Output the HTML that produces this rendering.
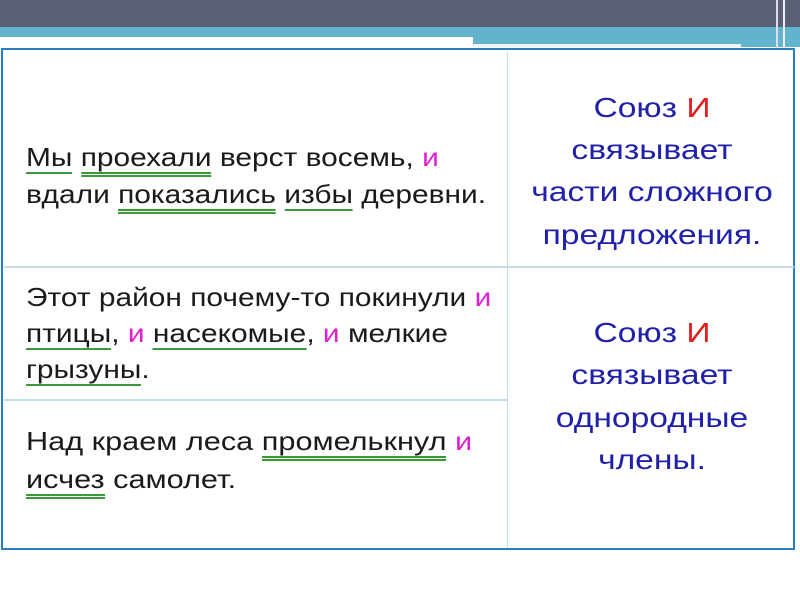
<!DOCTYPE html>
<html><head><meta charset="utf-8"><style>
body{margin:0;width:800px;height:600px;position:relative;background:#fff;overflow:hidden;font-family:"Liberation Sans",Arial,sans-serif}
.top{position:absolute;left:0;top:0;width:800px;height:27px;background:#5b6175}
.teal{position:absolute;left:0;top:27px;width:800px;height:20px;background:#62b4cc}
.w1{position:absolute;left:0;top:37px;width:473px;height:10px;background:#fff}
.w2{position:absolute;left:473px;top:44px;width:268px;height:3px;background:#eef6fa}
.box{position:absolute;left:1px;top:48px;width:794px;height:502px;border:2px solid #2a7fc0;box-sizing:border-box;background:#fff}
.vl{position:absolute;left:507px;top:52px;width:1px;height:496px;background:#c8dce8}
.hl{position:absolute;height:2px;background:#c8dce8}
.l{position:absolute;left:26px;font-size:26px;color:#1a1a1a;white-space:nowrap;line-height:28px;transform:scaleX(1.15);transform-origin:0 0}
.r{position:absolute;left:508px;width:288px;text-align:center;font-size:28px;color:#2020a8;line-height:32px;white-space:nowrap;transform:scaleX(1.2)}
.p{color:#e020d0}.red{color:#e02020}
.s{border-bottom:2px solid #3a9a3a;padding-bottom:0}
.d{border-bottom:5px double #3a9a3a;padding-bottom:0}
.rs{position:absolute;top:0;height:48px;width:2px;background:#dde}
</style></head><body>
<div class="top"></div><div class="teal"></div><div class="w1"></div><div class="w2"></div>
<div class="rs" style="left:776px"></div><div class="rs" style="left:783px;background:#eef"></div>
<div class="box"></div>
<div class="vl"></div>
<div class="hl" style="left:4px;top:266px;width:790px"></div>
<div class="hl" style="left:4px;top:399px;width:503px"></div>
<div class="l" style="top:143px"><span class="s">Мы</span> <span class="d">проехали</span> верст восемь, <span class="p">и</span></div>
<div class="l" style="top:180px">вдали <span class="d">показались</span> <span class="s">избы</span> деревни.</div>
<div class="l" style="top:283px">Этот район почему-то покинули <span class="p">и</span></div>
<div class="l" style="top:319px"><span class="s">птицы</span>, <span class="p">и</span> <span class="s">насекомые</span>, <span class="p">и</span> мелкие</div>
<div class="l" style="top:355px"><span class="s">грызуны</span>.</div>
<div class="l" style="top:427px;transform:scaleX(1.18)">Над краем леса <span class="d">промелькнул</span> <span class="p">и</span></div>
<div class="l" style="top:465px;transform:scaleX(1.18)"><span class="d">исчез</span> самолет.</div>
<div class="r" style="top:92px">Союз <span class="red">И</span></div>
<div class="r" style="top:134px">связывает</div>
<div class="r" style="top:176px">части сложного</div>
<div class="r" style="top:219px">предложения.</div>
<div class="r" style="top:317px">Союз <span class="red">И</span></div>
<div class="r" style="top:359px">связывает</div>
<div class="r" style="top:402px">однородные</div>
<div class="r" style="top:444px">члены.</div>
</body></html>
